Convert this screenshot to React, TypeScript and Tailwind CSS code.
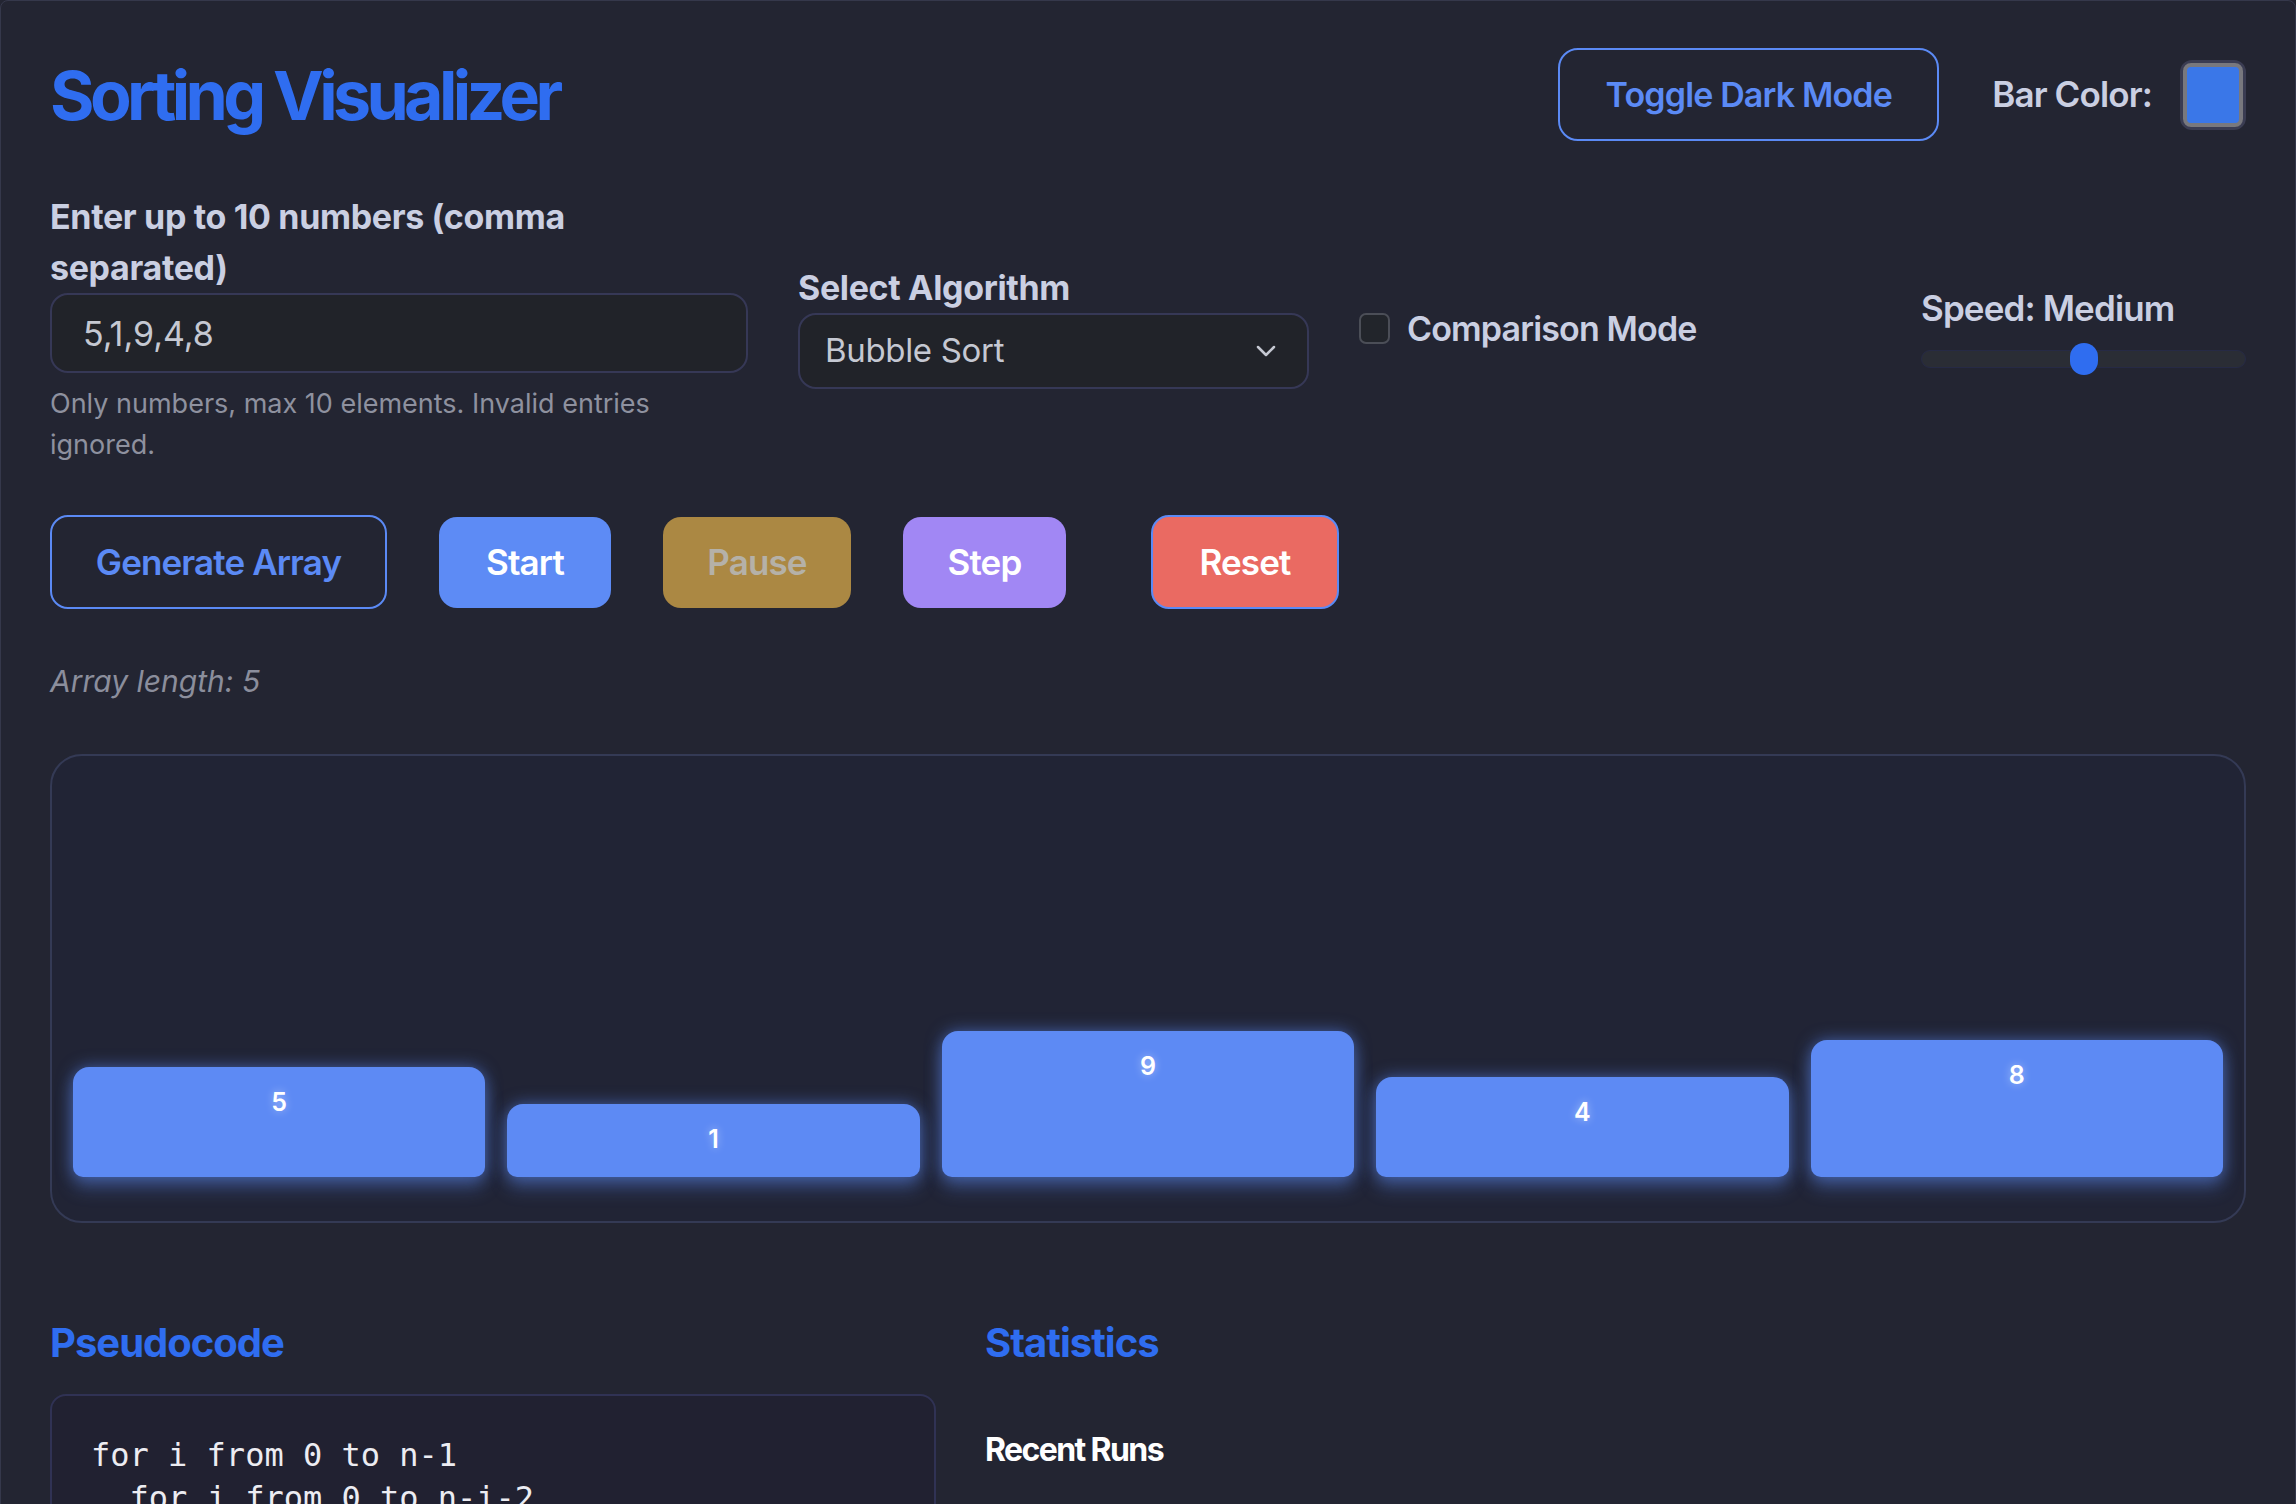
import React, { useState } from 'react';

const bars = [5, 1, 9, 4, 8];

const pseudo = [
  'for i from 0 to n-1',
  '  for j from 0 to n-i-2',
  '    if a[j] > a[j+1]',
  '      swap(a[j], a[j+1])',
];

export default function App() {
  const [input, setInput] = useState('5,1,9,4,8');
  const [compare, setCompare] = useState(false);

  return (
    <div className="min-h-screen bg-[#232532] font-['Inter','Liberation_Sans',sans-serif]">
      <div className="min-h-screen border border-[#35384b] rounded-[8px] px-[49px] pt-[47px] pb-[60px] flex flex-col gap-[50px]">
        {/* Header */}
        <div className="flex items-center justify-between">
          <h1 className="text-[68px] leading-none font-bold tracking-[-0.068em] text-[#2f6df0]">
            Sorting Visualizer
          </h1>
          <div className="flex items-center">
            <button className="h-[93px] w-[381px] rounded-[20px] border-2 border-[#5b8af5] text-[34px] font-semibold tracking-tight text-[#5b8af5]">
              Toggle Dark Mode
            </button>
            <span className="ml-[53px] text-[35px] font-semibold tracking-tight text-[#cacfe2]">
              Bar Color:
            </span>
            <div className="ml-[28px] w-[66px] h-[70px] rounded-[12px] border-[3px] border-[#3a3c52]">
              <div className="w-full h-full rounded-[8px] border-[4px] border-[#78787e] bg-[#3a77e8]" />
            </div>
          </div>
        </div>

        {/* Controls */}
        <div className="flex items-center gap-[50px]">
          <div className="w-[698px] flex flex-col">
            <label className="max-w-[600px] text-[34px] leading-[51px] font-bold tracking-[-0.01em] text-[#cacfe2]">
              Enter up to 10 numbers (comma separated)
            </label>
            <input
              value={input}
              onChange={(e) => setInput(e.target.value)}
              className="h-[80px] rounded-[18px] border-2 border-[#363856] bg-[#212329] px-[31px] text-[34px] text-[#c5c8d2] outline-none"
            />
            <p className="mt-[10px] max-w-[660px] text-[27px] leading-[41px] text-[#8e919f]">
              Only numbers, max 10 elements. Invalid entries ignored.
            </p>
          </div>

          <div className="w-[511px] flex flex-col">
            <label className="text-[34px] leading-[42px] font-bold tracking-[-0.01em] text-[#cacfe2]">
              Select Algorithm
            </label>
            <div className="mt-[4px] h-[76px] rounded-[18px] border-2 border-[#363856] bg-[#212329] pl-[25px] pr-[30px] flex items-center justify-between">
              <span className="text-[33px] tracking-[-0.01em] text-[#c5c8d2]">Bubble Sort</span>
              <svg width="22" height="14" viewBox="0 0 22 14" fill="none">
                <polyline points="3,3 11,11 19,3" stroke="#c5c8d2" strokeWidth="2.5" strokeLinecap="round" strokeLinejoin="round" />
              </svg>
            </div>
          </div>

          <label className="flex items-center gap-[17px] cursor-pointer" onClick={() => setCompare(!compare)}>
            <span
              className={`w-[31px] h-[31px] rounded-[7px] border-2 border-[#4b4e57] ${
                compare ? 'bg-[#2f6df0]' : 'bg-[#22252b]'
              }`}
            />
            <span className="text-[34px] font-semibold tracking-tight text-[#cacfe2]">Comparison Mode</span>
          </label>

          <div className="ml-auto w-[325px] flex flex-col">
            <span className="text-[35px] leading-[40px] font-semibold tracking-tight text-[#cacfe2]">
              Speed: Medium
            </span>
            <div className="relative mt-[22px] h-[18px] rounded-full bg-[#2a2d35] border border-[#262a45]">
              <span className="absolute left-1/2 top-1/2 -translate-x-1/2 -translate-y-1/2 w-[28px] h-[32px] rounded-full bg-[#2f6df0]" />
            </div>
          </div>
        </div>

        {/* Buttons */}
        <div className="flex items-center gap-[52px]">
          <button className="h-[94px] w-[337px] rounded-[18px] border-2 border-[#5b8af5] text-[35px] font-semibold tracking-tight text-[#5b8af5]">
            Generate Array
          </button>
          <button className="h-[91px] w-[172px] rounded-[18px] bg-[#5d8bf5] text-[35px] font-semibold tracking-tight text-white">
            Start
          </button>
          <button className="h-[91px] w-[188px] rounded-[18px] bg-[#ab8843] text-[35px] font-semibold tracking-tight text-[#b5b1a8]">
            Pause
          </button>
          <button className="h-[91px] w-[163px] rounded-[18px] bg-[#a187f4] text-[35px] font-semibold tracking-tight text-white">
            Step
          </button>
          <button className="ml-[33px] h-[94px] w-[188px] rounded-[18px] border-2 border-[#5b8af5] bg-[#ea6a62] text-[35px] font-semibold tracking-tight text-white">
            Reset
          </button>
        </div>

        <p className="text-[30px] leading-[45px] italic text-[#8b8e9c]">Array length: 5</p>

        {/* Bars */}
        <div className="h-[469px] rounded-[32px] border-2 border-[#343a55] bg-[#212435] px-[21px] pb-[44px] flex items-end gap-[22px]">
          {bars.map((v, i) => (
            <div
              key={i}
              className="flex-1 rounded-t-[16px] rounded-b-[10px] bg-[#5d8af4] shadow-[0_0_16px_rgba(93,139,245,0.55),0_12px_18px_rgba(93,139,245,0.3)] flex justify-center"
              style={{ height: 64 + v * 9.125 }}
            >
              <span className="pt-[21px] text-[25px] leading-[28px] font-semibold text-white [text-shadow:0_0_8px_rgba(255,255,255,0.45)]">
                {v}
              </span>
            </div>
          ))}
        </div>

        {/* Bottom */}
        <div className="mt-[40px] grid grid-cols-[886px_1fr] gap-[49px]">
          <div>
            <h2 className="text-[40px] leading-[60px] font-bold tracking-tight text-[#2f6df0]">Pseudocode</h2>
            <div className="mt-[21px] rounded-[16px] border-2 border-[#303254] bg-[#212131] px-[39px] pt-[38px] pb-[40px]">
              <pre className="font-['DejaVu_Sans_Mono','Liberation_Mono',monospace] text-[32px] leading-[43px] text-[#ececf2]">
                {pseudo.join('\n')}
              </pre>
            </div>
          </div>
          <div>
            <h2 className="text-[40px] leading-[60px] font-bold tracking-tight text-[#2f6df0]">Statistics</h2>
            <h3 className="mt-[55px] text-[32px] leading-[44px] font-bold tracking-[-0.05em] text-white">Recent Runs</h3>
          </div>
        </div>
      </div>
    </div>
  );
}
